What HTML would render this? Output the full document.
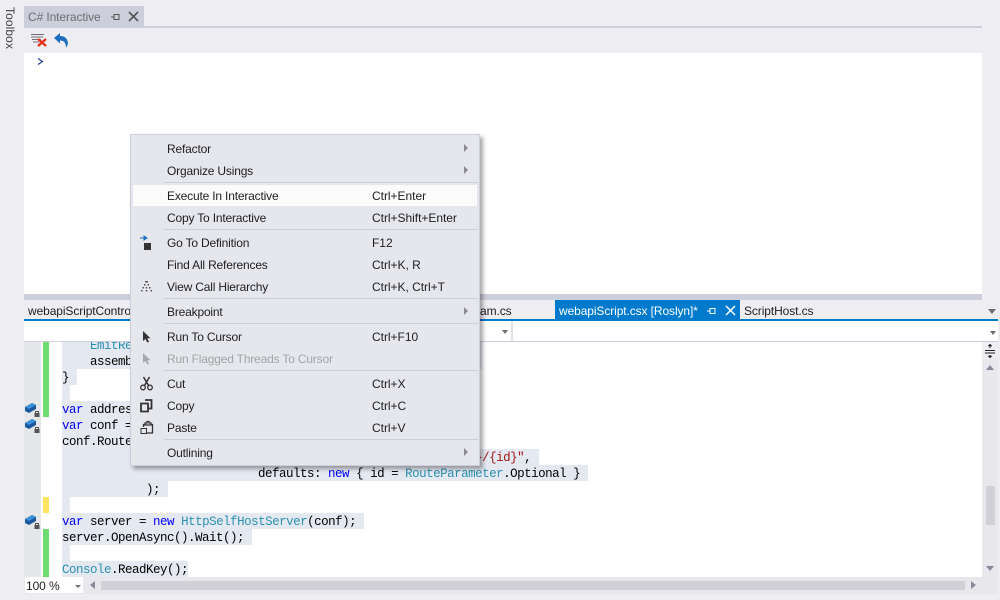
<!DOCTYPE html>
<html><head><meta charset="utf-8"><style>
html,body{margin:0;padding:0}
body{width:1000px;height:600px;position:relative;overflow:hidden;background:#eeeef2;font-family:"Liberation Sans",sans-serif;font-size:12px;color:#1e1e1e}
.a{position:absolute}
.t{position:absolute;white-space:pre;line-height:16px;letter-spacing:-.1px}
.hl{position:absolute;background:#e4e8f1;height:16px}
.code{position:absolute;left:62px;white-space:pre;font-family:"Liberation Mono",monospace;font-size:12.5px;letter-spacing:-.5px;line-height:16px;color:#000;margin-top:1px}
.k{color:#00f}.c{color:#2b91af}.s{color:#a31515}
.m{position:absolute;left:36px;white-space:pre;line-height:16px;font-size:12px;color:#1e1e1e;letter-spacing:-.18px;margin-top:1px}
.sc{position:absolute;left:241px;white-space:pre;line-height:16px;font-size:12px;color:#1e1e1e;margin-top:1px;letter-spacing:-.03px}
.sep{position:absolute;left:33px;width:314px;height:1px;background:#cccedb}
.ar{position:absolute;left:333px;width:0;height:0;border-left:4px solid #8a8a90;border-top:4px solid transparent;border-bottom:4px solid transparent}
.bar{position:absolute;left:43px;width:6px}
svg{position:absolute;overflow:visible}
</style></head><body>

<div class="t" style="width:42px;height:20px;transform:rotate(90deg);transform-origin:center;color:#444;text-align:center;line-height:20px;letter-spacing:.1px;left:-11px;top:18px">Toolbox</div>

<div class="a" style="left:24px;top:6px;width:120px;height:20px;background:#cccedb"></div>
<div class="t" style="left:28px;top:9px;color:#6d6d70">C# Interactive</div>
<svg style="left:111px;top:12px" width="10" height="10"><path d="M0 5H3M3 2.5H8V7.5H3ZM3 2V8" stroke="#555" fill="none"/></svg>
<svg style="left:128px;top:11px" width="11" height="11"><path d="M1 1L10 10M10 1L1 10" stroke="#555" stroke-width="1.6" fill="none"/></svg>
<div class="a" style="left:24px;top:26px;width:958px;height:2px;background:#cccedb"></div>

<svg style="left:30px;top:33px" width="18" height="15"><path d="M1 1.5H14M1 4H13M2 6.500H11M3 9H9" stroke="#6d6d75" fill="none"/><path d="M8 6L16 13M16 6L8 13" stroke="#e8321c" stroke-width="2.4" fill="none"/></svg>
<svg style="left:54px;top:33px" width="15" height="15"><path d="M0 5L6 0V3C11 3 14 6 14 11L12 15C12 10 10 7.500 6 7.500V10.500Z" fill="#1e6fc0"/></svg>

<div class="a" style="left:24px;top:53px;width:958px;height:241px;background:#fff"></div>
<svg style="left:37px;top:57px" width="7" height="9"><path d="M1 1.500L5.500 4.500L1 7.500" stroke="#1a3a80" stroke-width="1.100" fill="none"/></svg>
<div class="a" style="left:982px;top:27px;width:16px;height:267px;background:#eeeef2"></div>

<div class="a" style="left:24px;top:294px;width:958px;height:6px;background:#cccedb"></div>
<div class="t" style="left:28px;top:303px">webapiScriptControl</div>
<div class="t" style="left:480px;top:303px">am.cs</div>
<div class="a" style="left:555px;top:300px;width:185px;height:19px;background:#007acc"></div>
<div class="t" style="left:559px;top:303px;color:#fff">webapiScript.csx [Roslyn]*</div>
<svg style="left:707px;top:306px" width="10" height="10"><path d="M0 5H3M3 2.500H8V7.500H3ZM3 2V8" stroke="#fff" fill="none"/></svg>
<svg style="left:725px;top:305px" width="11" height="11"><path d="M1 1L10 10M10 1L1 10" stroke="#fff" stroke-width="1.500" fill="none"/></svg>
<div class="t" style="left:744px;top:303px">ScriptHost.cs</div>
<div class="a" style="left:988px;top:309px;width:0;height:0;border-left:4px solid transparent;border-right:4px solid transparent;border-top:5px solid #6d6d70;"></div>

<div class="a" style="left:24px;top:319px;width:974px;height:2px;background:#007acc"></div>
<div class="a" style="left:24px;top:321px;width:974px;height:20px;background:#fff"></div>
<div class="a" style="left:24px;top:341px;width:974px;height:1px;background:#cccedb"></div>
<div class="a" style="left:511px;top:321px;width:2px;height:20px;background:#e0e0e6"></div>
<div class="a" style="left:502px;top:330px;width:0;height:0;border-left:3.500px solid transparent;border-right:3.500px solid transparent;border-top:4px solid #6d6d70"></div>
<div class="a" style="left:990px;top:331px;width:0;height:0;border-left:3.500px solid transparent;border-right:3.500px solid transparent;border-top:4px solid #6d6d70"></div>

<div class="a" style="left:24px;top:342px;width:958px;height:235px;background:#fff;overflow:hidden">
  <div class="a" style="left:0;top:0;width:17px;height:235px;background:#e6e7e8"></div>
  <div style="position:absolute;left:-24px;top:-342px;width:1000px;height:600px">
    <div class="bar" style="top:342px;height:75px;background:#6fdc6f"></div>
    <div class="bar" style="top:497px;height:16px;background:#fde35f"></div>
    <div class="bar" style="top:529px;height:48px;background:#6fdc6f"></div>

    <div class="hl" style="left:62px;top:337px;width:420px"></div>
    <div class="hl" style="left:62px;top:353px;width:420px"></div>
    <div class="hl" style="left:62px;top:369px;width:15px"></div>
    <div class="hl" style="left:62px;top:385px;width:8px"></div>
    <div class="hl" style="left:62px;top:401px;width:400px"></div>
    <div class="hl" style="left:62px;top:417px;width:400px"></div>
    <div class="hl" style="left:62px;top:433px;width:400px"></div>
    <div class="hl" style="left:62px;top:449px;width:477px"></div>
    <div class="hl" style="left:62px;top:465px;width:526px"></div>
    <div class="hl" style="left:62px;top:481px;width:106px"></div>
    <div class="hl" style="left:62px;top:497px;width:8px"></div>
    <div class="hl" style="left:62px;top:513px;width:302px"></div>
    <div class="hl" style="left:62px;top:529px;width:190px"></div>
    <div class="hl" style="left:62px;top:545px;width:8px"></div>
    <div class="hl" style="left:62px;top:561px;width:126px"></div>

    <div class="code" style="top:337px">    <span class="c">EmitReflection</span></div>
    <div class="code" style="top:353px">    assembly</div>
    <div class="code" style="top:369px">}</div>
    <div class="code" style="top:401px"><span class="k">var</span> address</div>
    <div class="code" style="top:417px"><span class="k">var</span> conf =</div>
    <div class="code" style="top:433px">conf.Routes</div>
    <div class="code" style="top:449px">                            routeTemplate: <span class="s">"api/{controller}/{id}"</span>,</div>
    <div class="code" style="top:465px">                            defaults: <span class="k">new</span> { id = <span class="c">RouteParameter</span>.Optional }</div>
    <div class="code" style="top:481px">            );</div>
    <div class="code" style="top:513px"><span class="k">var</span> server = <span class="k">new</span> <span class="c">HttpSelfHostServer</span>(conf);</div>
    <div class="code" style="top:529px">server.OpenAsync().Wait();</div>
    <div class="code" style="top:561px"><span class="c">Console</span>.ReadKey();</div>

    <svg style="left:25px;top:402px" width="16" height="15"><path d="M0 5L7 1L11 3V7L4 11L0 9Z" fill="#1a5a9c"/><path d="M0 5L7 1L11 3L4 7Z" fill="#3c8fd8"/><rect x="9.500" y="11" width="5" height="4" fill="#555"/><path d="M10.500 11V9.500H13.500V11" stroke="#555" fill="none"/></svg>
    <svg style="left:25px;top:418px" width="16" height="15"><path d="M0 5L7 1L11 3V7L4 11L0 9Z" fill="#1a5a9c"/><path d="M0 5L7 1L11 3L4 7Z" fill="#3c8fd8"/><rect x="9.500" y="11" width="5" height="4" fill="#555"/><path d="M10.500 11V9.500H13.500V11" stroke="#555" fill="none"/></svg>
    <svg style="left:25px;top:514px" width="16" height="15"><path d="M0 5L7 1L11 3V7L4 11L0 9Z" fill="#1a5a9c"/><path d="M0 5L7 1L11 3L4 7Z" fill="#3c8fd8"/><rect x="9.500" y="11" width="5" height="4" fill="#555"/><path d="M10.500 11V9.500H13.500V11" stroke="#555" fill="none"/></svg>
  </div>
</div>

<div class="a" style="left:982px;top:342px;width:16px;height:235px;background:#e8e8ec"></div>
<svg style="left:982px;top:342px" width="16" height="17"><rect x="0" y="0" width="16" height="17" fill="#eeeef2"/><path d="M3 8.500H13M3 11H13" stroke="#222" fill="none"/><path d="M8 2V6M8 13V16" stroke="#222" fill="none"/><path d="M6 4L8 2L10 4ZM6 14L8 16L10 14Z" fill="#222" stroke="#222" stroke-width=".5"/></svg>
<div class="a" style="left:986px;top:365px;width:0;height:0;border-left:4.500px solid transparent;border-right:4.500px solid transparent;border-bottom:5px solid #868999"></div>
<div class="a" style="left:986px;top:486px;width:9px;height:39px;background:#d0d1d7"></div>
<div class="a" style="left:986px;top:566px;width:0;height:0;border-left:4.500px solid transparent;border-right:4.500px solid transparent;border-top:5px solid #868999"></div>

<div class="a" style="left:24px;top:577px;width:974px;height:17px;background:#e8e8ec"></div>
<div class="a" style="left:25px;top:577px;width:58px;height:16px;background:#fff"></div>
<div class="t" style="left:26px;top:578px">100 %</div>
<div class="a" style="left:75px;top:585px;width:0;height:0;border-left:3px solid transparent;border-right:3px solid transparent;border-top:3px solid #6d6d70"></div>
<div class="a" style="left:90px;top:581px;width:0;height:0;border-top:4.500px solid transparent;border-bottom:4.500px solid transparent;border-right:5px solid #868999"></div>
<div class="a" style="left:101px;top:581px;width:864px;height:9px;background:#d0d1d7"></div>
<div class="a" style="left:971px;top:581px;width:0;height:0;border-top:4.500px solid transparent;border-bottom:4.500px solid transparent;border-left:5px solid #868999"></div>

<div class="a" style="left:130px;top:134px;width:348px;height:330px;background:#e6e7ed;border:1px solid #cccedb;box-shadow:3px 3px 4px rgba(0,0,0,.35)">
  <div class="a" style="left:2px;top:50px;width:344px;height:21px;background:#fbfbfc"></div>
  <div class="sep" style="top:47px"></div>
  <div class="sep" style="top:94px"></div>
  <div class="sep" style="top:163px"></div>
  <div class="sep" style="top:188px"></div>
  <div class="sep" style="top:235px"></div>
  <div class="sep" style="top:304px"></div>

  <div class="m" style="top:5px">Refactor</div><div class="ar" style="top:9px"></div>
  <div class="m" style="top:27px">Organize Usings</div><div class="ar" style="top:31px"></div>
  <div class="m" style="top:52px">Execute In Interactive</div><div class="sc" style="top:52px">Ctrl+Enter</div>
  <div class="m" style="top:74px">Copy To Interactive</div><div class="sc" style="top:74px">Ctrl+Shift+Enter</div>
  <div class="m" style="top:99px">Go To Definition</div><div class="sc" style="top:99px">F12</div>
  <div class="m" style="top:121px">Find All References</div><div class="sc" style="top:121px">Ctrl+K, R</div>
  <div class="m" style="top:143px">View Call Hierarchy</div><div class="sc" style="top:143px">Ctrl+K, Ctrl+T</div>
  <div class="m" style="top:168px">Breakpoint</div><div class="ar" style="top:172px"></div>
  <div class="m" style="top:193px">Run To Cursor</div><div class="sc" style="top:193px">Ctrl+F10</div>
  <div class="m" style="top:215px;color:#a2a4a5">Run Flagged Threads To Cursor</div>
  <div class="m" style="top:240px">Cut</div><div class="sc" style="top:240px">Ctrl+X</div>
  <div class="m" style="top:262px">Copy</div><div class="sc" style="top:262px">Ctrl+C</div>
  <div class="m" style="top:284px">Paste</div><div class="sc" style="top:284px">Ctrl+V</div>
  <div class="m" style="top:309px">Outlining</div><div class="ar" style="top:313px"></div>

  <svg style="left:8px;top:100px" width="14" height="15"><path d="M1 3H5M5 1L8 3L5 5Z" stroke="#1e6fc0" fill="#1e6fc0"/><rect x="5" y="8" width="7" height="7" fill="#333"/></svg>
  <svg style="left:10px;top:146px" width="11" height="11"><path d="M4 0H7V1.500H4ZM3 3H4.500V4.500H3ZM6.500 3H8V4.500H6.500ZM1.500 6H3V7.500H1.500ZM4.700 6H6.200V7.500H4.700ZM8 6H9.500V7.500H8ZM0 9H1.500V10.500H0ZM4.700 9H6.200V10.500H4.700ZM9.500 9H11V10.500H9.500Z" fill="#555"/></svg>
  <svg style="left:12px;top:196px" width="9" height="12"><path d="M0 0V10L2.500 8L4.200 11.500L6 10.700L4.300 7.200H7.500Z" fill="#333"/></svg>
  <svg style="left:12px;top:218px" width="9" height="12"><path d="M0 0V10L2.500 8L4.200 11.500L6 10.700L4.300 7.200H7.500Z" fill="#a8a9ac"/></svg>
  <svg style="left:9px;top:242px" width="13" height="14"><path d="M3.500 0L8.500 8.500M9.500 0L4.500 8.500" stroke="#333" stroke-width="1.500" fill="none"/><circle cx="3" cy="10.500" r="2.300" fill="none" stroke="#333" stroke-width="1.300"/><circle cx="10" cy="10.500" r="2.300" fill="none" stroke="#333" stroke-width="1.300"/></svg>
  <svg style="left:9px;top:264px" width="13" height="14"><path d="M5 1H11.500V9.500H8.500M1 4.500H8V12.500H1Z" fill="none" stroke="#333" stroke-width="1.800"/></svg>
  <svg style="left:9px;top:285px" width="14" height="15"><path d="M5 5V3H7V1.500H9V3H11V5ZM3.500 7V4.500H5M11 4.500H12.500V13H7" fill="none" stroke="#333" stroke-width="1.300"/><rect x="1" y="8.500" width="5.500" height="5" fill="none" stroke="#333"/></svg>
</div>

</body></html>
